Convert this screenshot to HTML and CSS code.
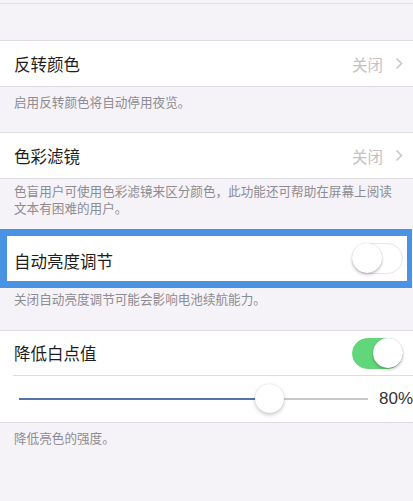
FILE: index.html
```html
<html>
    <head>
        <title>显示调节</title>
        <link rel="stylesheet" href="styles.css">
    </head>
    <body>
        <div class="page">
            <div class="top-gap"></div>

            <div class="group">
                <div class="cell">
                    <span class="cell-label">反转颜色</span>
                    <span class="cell-value">关闭</span>
                    <svg class="chevron" width="8" height="13" viewBox="0 0 8 13">
                        <polyline points="1.5,1.5 6.5,6.5 1.5,11.5" fill="none" stroke="#c7c7cc" stroke-width="1.6"/>
                    </svg>
                </div>
            </div>
            <div class="note">启用反转颜色将自动停用夜览。</div>

            <div class="group">
                <div class="cell">
                    <span class="cell-label">色彩滤镜</span>
                    <span class="cell-value">关闭</span>
                    <svg class="chevron" width="8" height="13" viewBox="0 0 8 13">
                        <polyline points="1.5,1.5 6.5,6.5 1.5,11.5" fill="none" stroke="#c7c7cc" stroke-width="1.6"/>
                    </svg>
                </div>
            </div>
            <div class="note note-tall">色盲用户可使用色彩滤镜来区分颜色，此功能还可帮助在屏幕上阅读文本有困难的用户。</div>

            <div class="group group-marked">
                <div class="cell cell-marked">
                    <span class="cell-label">自动亮度调节</span>
                    <span class="switch"><span class="knob"></span></span>
                </div>
            </div>
            <div class="note note-after-mark">关闭自动亮度调节可能会影响电池续航能力。</div>

            <div class="group">
                <div class="cell cell-divided">
                    <span class="cell-label">降低白点值</span>
                    <span class="switch switch-on"><span class="knob"></span></span>
                </div>
                <div class="slider-row">
                    <div class="track">
                        <div class="track-fill" style="width: 72%"></div>
                        <div class="thumb" style="left: 72%"></div>
                    </div>
                    <span class="slider-value">80%</span>
                </div>
            </div>
            <div class="note">降低亮色的强度。</div>
        </div>
    </body>
</html>
```

FILE: styles.css
```css
* {
box-sizing: border-box;
}
body {
margin: 0;
background-color: #f6f3f8;
font-family: "Noto Sans CJK SC", "Noto Sans", "Liberation Sans", sans-serif;
overflow: hidden;
}
.page {
width: 413px;
height: 501px;
overflow: hidden;
}
.top-gap {
border-top: 1px solid #e4e2e8;
margin-top: 3px;
height: 37px;
}
.group {
background-color: #FFF;
border-top: 1px solid #dedce2;
border-bottom: 1px solid #dedce2;
}
.cell {
height: 45px;
display: flex;
align-items: center;
padding: 0 10px 0 14px;
}
.cell-label {
flex: 1;
font-size: 16.5px;
color: #1e1e20;
}
.cell-value {
font-size: 15.5px;
color: #c2c2c6;
margin-right: 12px;
}
.chevron {
display: block;
}
.note {
padding: 6px 14px 22px 14px;
font-size: 12.6px;
line-height: 17px;
color: #8d8c92;
}
.note-tall {
padding-top: 3px;
padding-bottom: 20px;
}
.note-after-mark {
padding-top: 9px;
padding-bottom: 23px;
}
.group-marked {
position: relative;
border: none;
}
.group-marked::after {
content: "";
position: absolute;
left: 0;
right: 1px;
top: -7px;
bottom: -7px;
border: 7px solid #4a92e4;
border-right-width: 5px;
}
.cell-marked .cell-label {
padding-top: 4px;
}
.switch {
position: relative;
width: 51px;
height: 31px;
border-radius: 16px;
background-color: #FFF;
border: 1.5px solid #e9e4e6;
}
.switch .knob {
position: absolute;
top: -1px;
left: -1px;
width: 30px;
height: 30px;
border-radius: 50%;
background-color: #FFF;
box-shadow: 0 2px 3px rgba(0, 0, 0, 0.22), 0 0 1px rgba(0, 0, 0, 0.25);
}
.switch-on {
background-color: #62d67a;
border-color: #62d67a;
}
.switch-on .knob {
left: auto;
right: -1px;
}
.cell-divided {
border-bottom: 1px solid #dedce2;
margin-left: 13px;
padding-left: 1px;
}
.slider-row {
height: 46px;
display: flex;
align-items: center;
padding-left: 19px;
}
.track {
position: relative;
width: 350px;
height: 2px;
background-color: #c9c9cc;
}
.track-fill {
height: 2px;
background-color: #5373ab;
}
.thumb {
position: absolute;
top: -14px;
width: 29px;
height: 29px;
margin-left: -15px;
border-radius: 50%;
background-color: #FFF;
box-shadow: 0 2px 4px rgba(0, 0, 0, 0.2), 0 0 1px rgba(0, 0, 0, 0.2);
}
.slider-value {
margin-left: 11px;
font-family: "Liberation Sans", sans-serif;
font-size: 17px;
color: #333;
white-space: nowrap;
}
```
